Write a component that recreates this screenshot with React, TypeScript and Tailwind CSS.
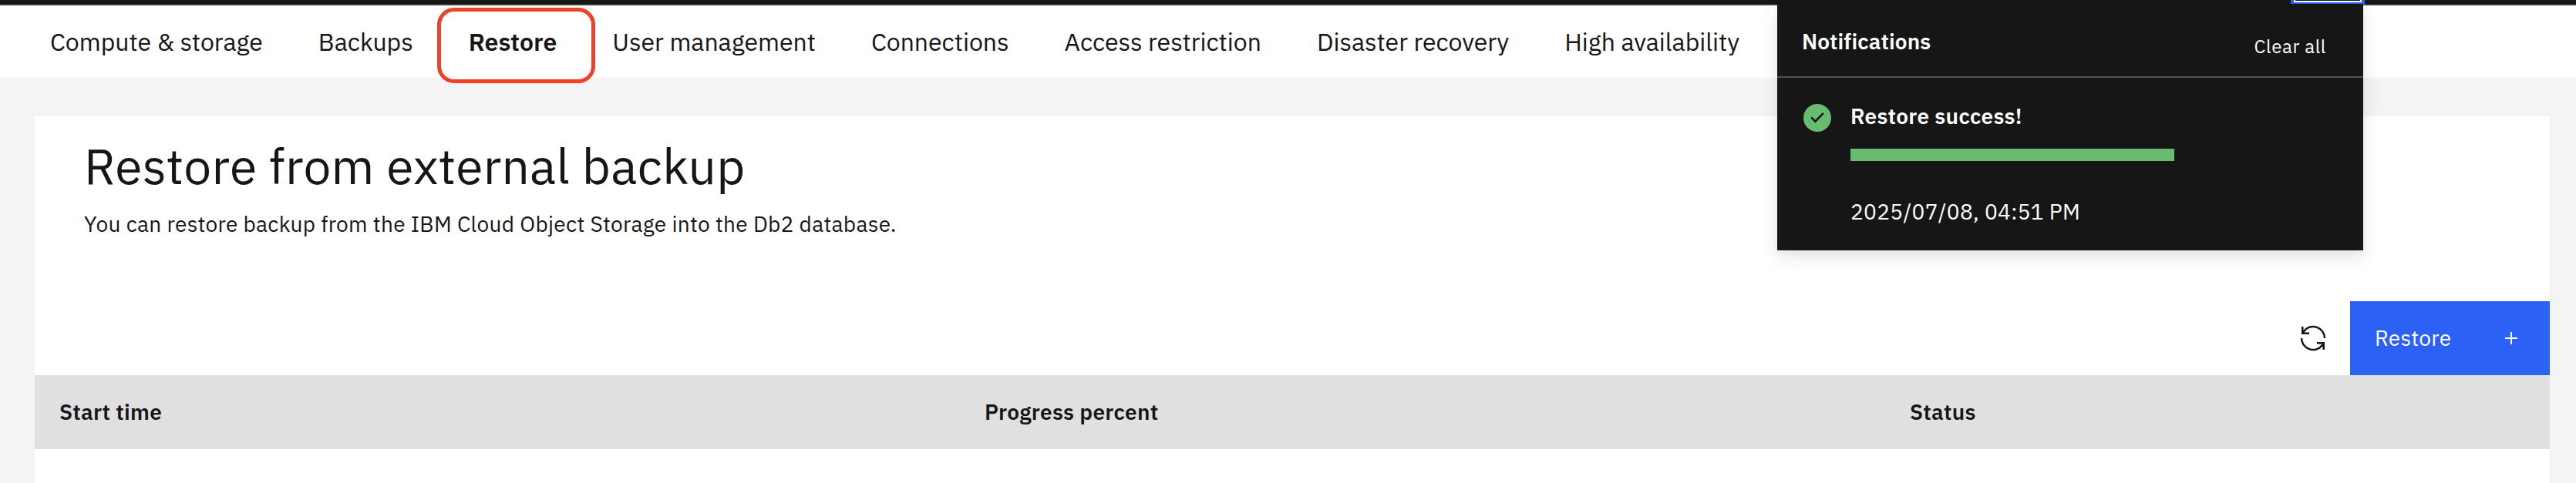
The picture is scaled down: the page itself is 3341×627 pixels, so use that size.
const tabs = [
  "Compute & storage",
  "Backups",
  "Restore",
  "User management",
  "Connections",
  "Access restriction",
  "Disaster recovery",
  "High availability",
];

function TabBar() {
  return (
    <nav className="flex h-[94px] items-center gap-[72px] bg-white pl-[65px] text-[32px] leading-10">
      {tabs.map((tab) =>
        tab === "Restore" ? (
          <span key={tab} className="relative font-semibold">
            {tab}
            <span className="absolute -left-[41px] -top-[24px] h-[98px] w-[205px] rounded-[22px] border-[5px] border-[#ee4126]" />
          </span>
        ) : (
          <span key={tab}>{tab}</span>
        ),
      )}
    </nav>
  );
}

function RenewIcon() {
  return (
    <svg className="size-10" viewBox="0 0 32 32" fill="#161616">
      <path d="M12 10H6.78A11 11 0 0 1 27 16h2A13 13 0 0 0 6 7.68V4H4v8h8z" />
      <path d="M20 22h5.22A11 11 0 0 1 5 16H3a13 13 0 0 0 23 8.32V28h2v-8h-8z" />
    </svg>
  );
}

function AddIcon() {
  return (
    <svg className="size-8" viewBox="0 0 32 32" fill="#ffffff">
      <path d="M17 15V8h-2v7H8v2h7v7h2v-7h7v-2z" />
    </svg>
  );
}

function CheckmarkFilledIcon() {
  return (
    <svg className="-ml-0.5 size-10 shrink-0" viewBox="0 0 20 20">
      <circle cx="10" cy="10" r="9" fill="#68bc70" />
      <path d="M13.5 6.5 8.7 11.4 6.5 9.2 5.6 10.1 8.7 13.2 14.4 7.4z" fill="#161616" />
    </svg>
  );
}

function NotificationsPanel() {
  return (
    <section className="absolute left-[2305px] top-[5px] h-80 w-[760px] bg-[#161616] text-[28px] leading-9 tracking-[0.32px] text-white shadow-[0_4px_8px_rgba(0,0,0,0.04),0_8px_24px_rgba(0,0,0,0.1)]">
      <header className="flex h-24 items-start justify-between border-b-2 border-[#525252] pl-8 pr-12 pt-[31px]">
        <h2 className="font-semibold tracking-[0.1px]">Notifications</h2>
        <button className="pt-[8px] text-2xl leading-8 tracking-[0.64px]">Clear all</button>
      </header>
      <div className="flex gap-[23px] px-[34px] pt-8">
        <CheckmarkFilledIcon />
        <div>
          <h3 className="font-semibold">Restore success!</h3>
          <div className="mt-6 h-4 w-[420px] bg-[#68bc70]" />
          <p className="mt-12">2025/07/08, 04:51 PM</p>
        </div>
      </div>
    </section>
  );
}

export default function App() {
  return (
    <div className="relative flex h-[627px] w-[3341px] flex-col overflow-hidden bg-[#f4f4f4] font-['IBM_Plex_Sans',Roboto,sans-serif] text-[#161616]">
      <div className="relative h-[7px] shrink-0 border-b-2 border-[#393939] bg-[#161616]">
        <div className="absolute -top-20 left-[2971px] h-[87px] w-24 border-4 border-[#2b61f5] bg-[#161616]">
          <div className="size-full border-2 border-white" />
        </div>
      </div>
      <TabBar />
      <main className="ml-[45px] mr-[34px] mt-[50px] flex grow flex-col bg-white">
        <div className="h-60 pl-16 pt-6">
          <h1 className="text-[64px] leading-[80px] tracking-[0.32px]">Restore from external backup</h1>
          <p className="mt-[18px] text-[28px] leading-9 tracking-[0.32px]">
            You can restore backup from the IBM Cloud Object Storage into the Db2 database.
          </p>
        </div>
        <div className="flex h-24 items-center justify-end gap-7">
          <button>
            <RenewIcon />
          </button>
          <button className="flex h-24 w-[259px] items-center justify-between bg-[#2b61f5] pl-8 pr-[34px] text-[28px] leading-9 tracking-[0.32px] text-white">
            <span>Restore</span>
            <AddIcon />
          </button>
        </div>
        <div className="grid h-24 grid-cols-[1200px_1200px_1fr] items-center bg-[#e0e0e0] text-[28px] font-semibold leading-9 tracking-[0.32px]">
          <span className="pl-8">Start time</span>
          <span className="pl-8">Progress percent</span>
          <span className="pl-8">Status</span>
        </div>
      </main>
      <NotificationsPanel />
    </div>
  );
}
